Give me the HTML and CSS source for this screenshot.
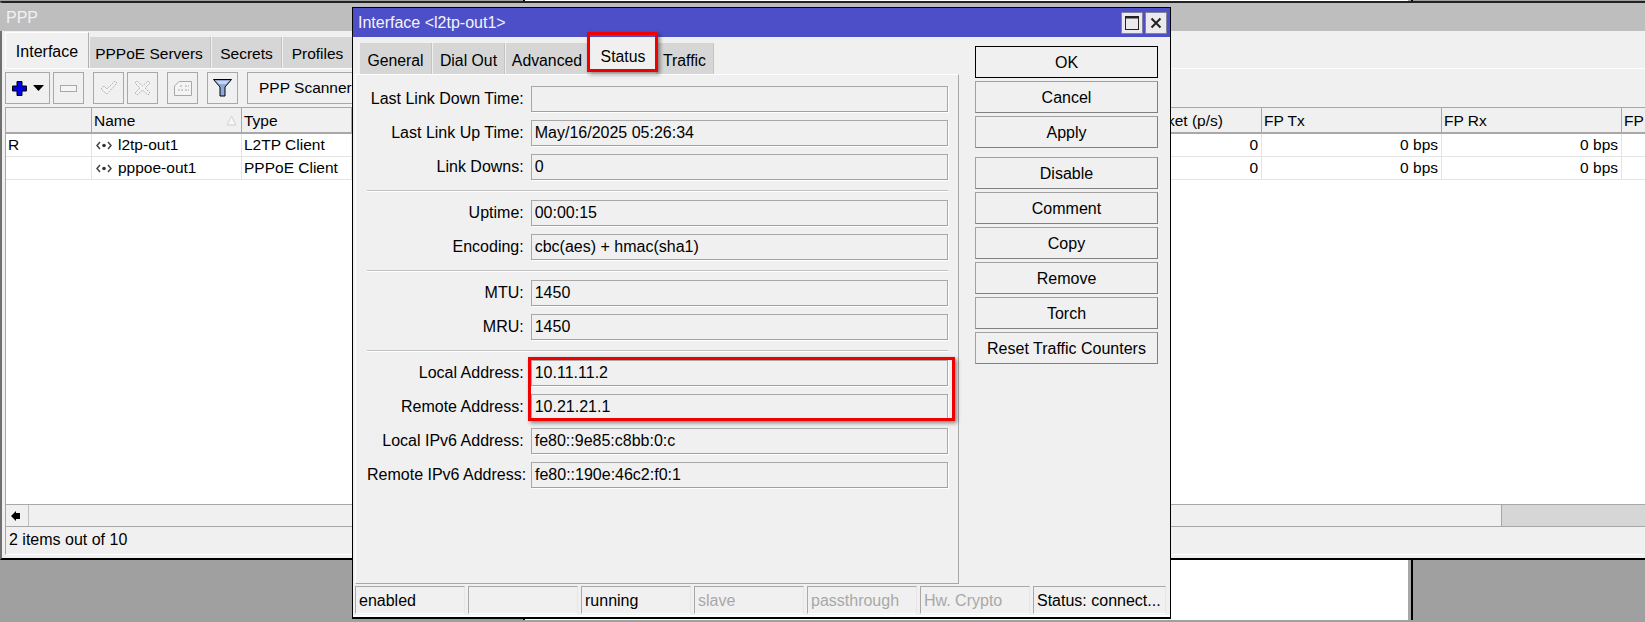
FILE: index.html
```html
<!DOCTYPE html>
<html lang="en">

<head>
    <meta charset="UTF-8">
    <title>PPP - Interface l2tp-out1</title>
    <link rel="stylesheet" href="styles.css">
</head>

<body>
    <div class="back-window"></div>

    <div class="ppp-window">
        <div class="ppp-title">PPP</div>
        <div class="ppp-tabs">
            <div class="tab active">Interface</div>
            <div class="tab w-pppoe">PPPoE Servers</div>
            <div class="tab w-secrets">Secrets</div>
            <div class="tab w-profiles">Profiles</div>
        </div>
        <div class="toolbar">
            <button class="tool tool-add">
                <svg width="15" height="15" viewBox="0 0 15 15"><path d="M5 .5h5v4.500h4.500v5H10v4.500H5V10H.5V5H5z" fill="#0000e6" stroke="#000"/></svg>
                <svg width="11" height="6" viewBox="0 0 11 6"><path d="M0 0h11L5.500 6z" fill="#000"/></svg>
            </button>
            <button class="tool">
                <svg width="17" height="7" viewBox="0 0 17 7"><rect x=".5" y=".5" width="16" height="6" fill="#f4f4f4" stroke="#a8a8a8"/></svg>
            </button>
            <button class="tool gap-left">
                <svg width="18" height="16" viewBox="0 0 18 16"><path d="M1 9l3-3 3 3 8-8 2 2-10 11z" fill="#f4f4f4" stroke="#b0b0b0" stroke-dasharray="2 1"/></svg>
            </button>
            <button class="tool">
                <svg width="17" height="16" viewBox="0 0 17 16"><path d="M1 3l2-2 5.500 5L14 1l2 2-5 5 5 5-2 2-5.500-5L3 15l-2-2 5-5z" fill="#f4f4f4" stroke="#b0b0b0" stroke-dasharray="2 1"/></svg>
            </button>
            <button class="tool gap-left">
                <svg width="18" height="15" viewBox="0 0 18 15"><path d="M5 .5h12.500v14H.5V5z" fill="#f4f4f4" stroke="#a8a8a8"/><path d="M6 5h3M11 5h4M4 9h5M11 9h4" stroke="#a8a8a8" stroke-dasharray="2 1"/></svg>
            </button>
            <button class="tool gap-left">
                <svg width="19" height="18" viewBox="0 0 19 18"><path d="M.5.500h18L12 8v9H7V8z" fill="#8fa8d8" stroke="#000"/><path d="M3 2h13l-3 3H6z" fill="#c8d4ec"/></svg>
            </button>
            <button class="tool tool-text gap-left">PPP Scanner</button>
        </div>

        <div class="table">
            <div class="row head">
                <div class="cell"></div>
                <div class="cell cell-name">Name
                    <svg class="sort" width="11" height="11" viewBox="0 0 11 11"><path d="M5.500 1L10 10H1z" fill="#f6f6f6" stroke="#d0d0d0"/></svg>
                </div>
                <div class="cell">Type</div>
                <div class="cell"></div>
                <div class="cell"></div>
                <div class="cell"></div>
                <div class="cell"></div>
                <div class="cell"></div>
                <div class="cell">Rx Packet (p/s)</div>
                <div class="cell">FP Tx</div>
                <div class="cell">FP Rx</div>
                <div class="cell">FP</div>
            </div>
            <div class="row">
                <div class="cell">R</div>
                <div class="cell cell-iface">
                    <svg width="16" height="9" viewBox="0 0 16 9"><path d="M4 1L1 4.500 4 8M12 1l3 3.500L12 8" fill="none" stroke="#444" stroke-width="1.500"/><circle cx="8" cy="4.500" r="1.800" fill="#333"/></svg>
                    l2tp-out1
                </div>
                <div class="cell">L2TP Client</div>
                <div class="cell"></div>
                <div class="cell"></div>
                <div class="cell"></div>
                <div class="cell"></div>
                <div class="cell"></div>
                <div class="cell num">0</div>
                <div class="cell num">0 bps</div>
                <div class="cell num">0 bps</div>
                <div class="cell"></div>
            </div>
            <div class="row">
                <div class="cell"></div>
                <div class="cell cell-iface">
                    <svg width="16" height="9" viewBox="0 0 16 9"><path d="M4 1L1 4.500 4 8M12 1l3 3.500L12 8" fill="none" stroke="#444" stroke-width="1.500"/><circle cx="8" cy="4.500" r="1.800" fill="#333"/></svg>
                    pppoe-out1
                </div>
                <div class="cell">PPPoE Client</div>
                <div class="cell"></div>
                <div class="cell"></div>
                <div class="cell"></div>
                <div class="cell"></div>
                <div class="cell"></div>
                <div class="cell num">0</div>
                <div class="cell num">0 bps</div>
                <div class="cell num">0 bps</div>
                <div class="cell"></div>
            </div>
        </div>

        <div class="hscroll">
            <div class="hscroll-arrow">
                <svg width="10" height="10" viewBox="0 0 10 10"><path d="M0 5l5-5v2h4v6H5v2z" fill="#000"/></svg>
            </div>
            <div class="hscroll-thumb"></div>
            <div class="hscroll-track"></div>
        </div>
        <div class="ppp-status">2 items out of 10</div>
    </div>

    <div class="dialog">
        <div class="dialog-title">
            <span class="dialog-name">Interface &lt;l2tp-out1&gt;</span>
            <div class="win-btns">
                <div class="win-btn">
                    <svg width="14" height="14" viewBox="0 0 14 14"><rect x=".5" y="1" width="13" height="12.500" fill="none" stroke="#222"/><rect x="0" y="0" width="14" height="2.500" fill="#222"/></svg>
                </div>
                <div class="win-btn">
                    <svg width="12" height="12" viewBox="0 0 12 12"><path d="M1.500 1.500l9 9M10.500 1.500l-9 9" stroke="#222" stroke-width="2"/></svg>
                </div>
            </div>
        </div>

        <div class="dialog-main">
            <div class="dialog-left">
                <div class="dialog-tabs">
                    <div class="dtab w-general">General</div>
                    <div class="dtab w-dialout">Dial Out</div>
                    <div class="dtab w-advanced">Advanced</div>
                    <div class="dtab active w-status">Status</div>
                    <div class="dtab w-traffic">Traffic</div>
                </div>
                <div class="panel">
                    <div class="group">
                        <div class="field"><label>Last Link Down Time:</label><div class="value"></div></div>
                        <div class="field"><label>Last Link Up Time:</label><div class="value">May/16/2025 05:26:34</div></div>
                        <div class="field"><label>Link Downs:</label><div class="value">0</div></div>
                    </div>
                    <div class="sep"></div>
                    <div class="group">
                        <div class="field"><label>Uptime:</label><div class="value">00:00:15</div></div>
                        <div class="field"><label>Encoding:</label><div class="value">cbc(aes) + hmac(sha1)</div></div>
                    </div>
                    <div class="sep"></div>
                    <div class="group">
                        <div class="field"><label>MTU:</label><div class="value">1450</div></div>
                        <div class="field"><label>MRU:</label><div class="value">1450</div></div>
                    </div>
                    <div class="sep"></div>
                    <div class="group">
                        <div class="field"><label>Local Address:</label><div class="value">10.11.11.2</div></div>
                        <div class="field"><label>Remote Address:</label><div class="value">10.21.21.1</div></div>
                        <div class="field"><label>Local IPv6 Address:</label><div class="value">fe80::9e85:c8bb:0:c</div></div>
                        <div class="field"><label>Remote IPv6 Address:</label><div class="value">fe80::190e:46c2:f0:1</div></div>
                    </div>
                </div>
            </div>
            <div class="dialog-buttons">
                <div class="btn-group">
                    <button class="btn default">OK</button>
                    <button class="btn">Cancel</button>
                    <button class="btn">Apply</button>
                </div>
                <div class="btn-group">
                    <button class="btn">Disable</button>
                    <button class="btn">Comment</button>
                    <button class="btn">Copy</button>
                    <button class="btn">Remove</button>
                    <button class="btn">Torch</button>
                    <button class="btn">Reset Traffic Counters</button>
                </div>
            </div>
        </div>

        <div class="dialog-status">
            <div class="scell">enabled</div>
            <div class="scell"></div>
            <div class="scell">running</div>
            <div class="scell off">slave</div>
            <div class="scell off">passthrough</div>
            <div class="scell off">Hw. Crypto</div>
            <div class="scell last">Status: connect...</div>
        </div>
    </div>

    <!-- red annotation boxes drawn over the screenshot -->
    <div class="mark mark-tab"></div>
    <div class="mark mark-address"></div>
</body>

</html>
```

FILE: styles.css
```css
* {
    box-sizing: border-box;
}

html,
body {
    margin: 0;
    height: 622px;
    overflow: hidden;
}

body {
    position: relative;
    background-color: #a0a0a0;
    color: #000;
    font-family: 'Liberation Sans', Arial, sans-serif;
    font-size: 16px;
}

button {
    font: inherit;
    color: inherit;
    padding: 0;
}

.back-window {
    position: absolute;
    left: 523px;
    top: 0;
    width: 890px;
    height: 620px;
    background-color: #fff;
    border-left: 2px solid #000;
    border-right: 2px solid #000;
    box-shadow: inset -3px 0 0 #a8a8a8;
}

/* PPP window */
.ppp-window {
    position: absolute;
    left: 0;
    top: 1px;
    width: 1645px;
    height: 559px;
    display: flex;
    flex-direction: column;
    background-color: #f0f0f0;
    border-top: 2px solid #222;
    border-bottom: 2px solid #000;
    border-left: 2px solid #707070;
    padding-bottom: 3px;
}

.ppp-title {
    height: 28px;
    margin-left: -2px;
    padding-left: 6px;
    line-height: 29px;
    background-color: #bebebe;
    color: #f2f2f2;
}

.ppp-tabs {
    height: 38px;
    display: flex;
    align-items: flex-end;
    gap: 1px;
    margin-left: 3px;
    border-bottom: 1px solid #fff;
    font-size: 15.5px;
}

.tab {
    height: 31px;
    line-height: 34px;
    text-align: center;
    background-color: #d6d6d6;
    border-right: 1px solid #c4c4c4;
}

.tab.active {
    width: 84px;
    height: 36px;
    line-height: 38px;
    font-size: 16px;
    background-color: #f0f0f0;
    border-top: 1px solid #fff;
    border-left: 1px solid #fff;
    border-right: 1px solid #b0b0b0;
}

.w-pppoe {
    width: 121px;
    padding-right: 2px;
}

.w-secrets {
    width: 70px;
}

.w-profiles {
    width: 70px;
}

.toolbar {
    height: 38px;
    display: flex;
    gap: 3px;
    padding-top: 3px;
    margin-left: 3px;
}

.tool {
    width: 31px;
    height: 32px;
    display: flex;
    align-items: center;
    justify-content: center;
    background-color: #f0f0f0;
    border: 1px solid #a8a8a8;
}

.tool-add {
    width: 45px;
    gap: 6px;
    padding-left: 1px;
}

.tool-text {
    width: 200px;
    justify-content: flex-start;
    padding-left: 11px;
    font-size: 15.5px;
}

.gap-left {
    margin-left: 6px;
}

/* table */
.table {
    flex: 1;
    margin-left: 3px;
    background-color: #fff;
    border-left: 1px solid #a8a8a8;
    border-top: 1px solid #a8a8a8;
    border-bottom: 1px solid #a8a8a8;
    white-space: nowrap;
    font-size: 15.5px;
}

.row {
    height: 23px;
    display: grid;
    grid-template-columns: 86px 150px 110px 110px 110px 170px 170px 203px 147px 180px 180px 60px;
    border-bottom: 1px solid #e4e4e4;
    line-height: 22px;
}

.row.head {
    height: 26px;
    line-height: 25px;
    background-color: #f0f0f0;
    border-bottom: 2px solid #a8a8a8;
}

.cell {
    position: relative;
    padding: 0 3px 0 2px;
    overflow: hidden;
    border-right: 1px solid #e4e4e4;
}

.head .cell {
    border-right-color: #a8a8a8;
}

.cell-iface {
    display: flex;
    align-items: center;
    gap: 6px;
    padding-left: 4px;
}

.num {
    text-align: right;
}

.sort {
    position: absolute;
    right: 4px;
    top: 7px;
}

.hscroll {
    height: 22px;
    display: flex;
    margin-left: 3px;
    border-left: 1px solid #a8a8a8;
    border-bottom: 1px solid #a8a8a8;
}

.hscroll-arrow {
    width: 23px;
    display: flex;
    align-items: center;
    justify-content: center;
    padding-right: 2px;
    border-right: 1px solid #c0c0c0;
}

.hscroll-thumb {
    width: 1473px;
    border-right: 1px solid #a8a8a8;
}

.hscroll-track {
    flex: 1;
    background-color: #d6d6d6;
}

.ppp-status {
    height: 28px;
    margin-left: 3px;
    padding-left: 3px;
    line-height: 26px;
    border-left: 1px solid #a8a8a8;
    border-bottom: 1px solid #fff;
}

/* dialog */
.dialog {
    position: absolute;
    left: 352px;
    top: 7px;
    width: 819px;
    height: 612px;
    display: flex;
    flex-direction: column;
    background-color: #f0f0f0;
    border: 1px solid #000;
    border-bottom-width: 2px;
    box-shadow: inset 0 -2px 0 #fff;
}

.dialog-title {
    height: 29px;
    display: flex;
    align-items: center;
    justify-content: space-between;
    padding: 0 3px 0 5px;
    background-color: #4d4fc8;
    color: #f4f4f4;
}

.dialog-name {
    padding-top: 1px;
}

.win-btns {
    display: flex;
    gap: 2px;
}

.win-btn {
    width: 22px;
    height: 22px;
    display: flex;
    align-items: center;
    justify-content: center;
    background-color: #ece9ec;
    border: 1px solid #666;
    border-top-color: #fff;
    border-left-color: #fff;
    outline: 1px solid #8080a0;
    outline-offset: -1px;
}

.dialog-main {
    height: 547px;
    display: flex;
}

.dialog-left {
    width: 606px;
    padding-left: 2px;
}

.dialog-tabs {
    height: 37px;
    display: flex;
    align-items: flex-end;
    gap: 1px;
    padding-left: 5px;
    font-size: 15.8px;
}

.dtab {
    height: 31px;
    line-height: 35px;
    text-align: center;
    background-color: #d6d6d6;
    border-right: 1px solid #c4c4c4;
}

.dtab.active {
    height: 37px;
    line-height: 40px;
    background-color: #f0f0f0;
    border-right: 0;
}

.w-general {
    width: 72px;
}

.w-dialout {
    width: 72px;
}

.w-advanced {
    width: 83px;
}

.w-status {
    width: 66px;
}

.w-traffic {
    width: 58px;
    margin-left: -1px;
}

.panel {
    height: 510px;
    padding: 11px 10px 0 11px;
    border-top: 1px solid #fff;
    border-left: 1px solid #fff;
    border-right: 1px solid #a8a8a8;
    border-bottom: 1px solid #a8a8a8;
}

.group {
    display: flex;
    flex-direction: column;
    gap: 8px;
}

.field {
    height: 26px;
    display: flex;
    gap: 7px;
}

.field label {
    width: 157px;
    line-height: 26px;
    text-align: right;
    white-space: nowrap;
}

.value {
    width: 418px;
    padding-left: 3px;
    line-height: 24px;
    border: 1px solid #a8a8a8;
    border-bottom-color: #a0a0a0;
    box-shadow: 1px 1px 0 #fff;
}

.sep {
    height: 2px;
    margin: 10px 0 8px;
    background-color: #c0c0c0;
    border-bottom: 1px solid #fff;
}

.dialog-buttons {
    width: 183px;
    margin-left: 16px;
    padding-top: 9px;
    display: flex;
    flex-direction: column;
    gap: 9px;
}

.btn-group {
    display: flex;
    flex-direction: column;
    gap: 3px;
}

.btn {
    height: 32px;
    padding-top: 2px;
    background-color: #f0f0f0;
    border: 1px solid #a0a0a0;
    border-right-color: #808080;
    border-bottom-color: #808080;
}

.btn.default {
    border: 1px solid #000;
}

.dialog-status {
    height: 28px;
    display: flex;
    gap: 3px;
    margin-top: 2px;
    padding-left: 2px;
}

.scell {
    width: 110px;
    padding-left: 3px;
    line-height: 27px;
    white-space: nowrap;
    border-top: 1px solid #a8a8a8;
    border-left: 1px solid #a8a8a8;
    border-right: 1px solid #e6e6e6;
    border-bottom: 1px solid #fff;
}

.scell.off {
    color: #a8a8a8;
}

.scell.last {
    width: 133px;
}

/* annotations */
.mark {
    position: absolute;
    border: 3px solid #f00000;
    box-shadow: 2px 2px 4px rgba(0, 0, 0, 0.45);
}

.mark-tab {
    left: 587px;
    top: 32px;
    width: 71px;
    height: 40px;
}

.mark-address {
    left: 528px;
    top: 357px;
    width: 427px;
    height: 64px;
}
```
